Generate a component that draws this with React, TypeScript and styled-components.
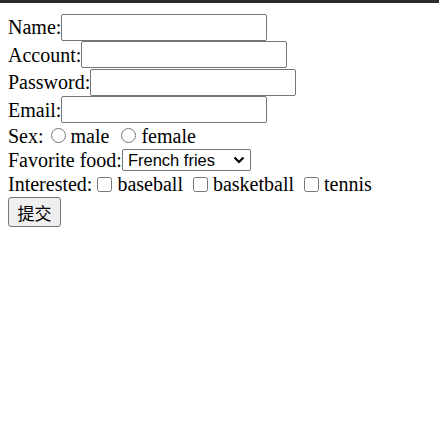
import styled, { createGlobalStyle } from 'styled-components';

const GlobalStyle = createGlobalStyle`
  html, body {
    margin: 0;
    padding: 0;
    background: #ffffff;
  }
  body {
    font-family: "Liberation Serif", "Noto Sans CJK SC", serif;
    font-size: 20px;
    color: #000000;
  }
`;

const TopBar = styled.div`
  height: 3px;
  background: #2b2b2b;
`;

const Form = styled.form`
  display: flex;
  flex-direction: column;
  padding: 10px 8px 0;
`;

const Row = styled.div<{ h: number }>`
  display: flex;
  align-items: center;
  height: ${({ h }) => h}px;
  white-space: nowrap;
  line-height: 1;
`;

const Label = styled.span`
  font-size: 20px;
`;

const TextInput = styled.input`
  box-sizing: border-box;
  width: 206px;
  height: 27px;
  margin: 0;
  padding: 1px 2px;
  border: 1px solid #767676;
  border-radius: 2px;
  font-family: "Liberation Sans", Arial, sans-serif;
  font-size: 16px;
  background: #ffffff;
`;

const Choice = styled.label`
  display: inline-flex;
  align-items: center;
  margin-right: 5px;
`;

const Radio = styled.input`
  width: 15px;
  height: 15px;
  margin: 0 5px 0 7px;
`;

const Check = styled.input`
  width: 15px;
  height: 15px;
  margin: 0 5px 0 5px;
`;

const SelectWrap = styled.span`
  position: relative;
  display: inline-flex;
`;

const Select = styled.select`
  box-sizing: border-box;
  width: 129px;
  height: 22px;
  margin: 0;
  padding: 0 0 0 5px;
  border: 1px solid #767676;
  border-radius: 2px;
  appearance: none;
  font-family: "Liberation Sans", Arial, sans-serif;
  font-size: 16.5px;
  background: #ffffff;
  color: #000000;
`;

const Chevron = styled.svg`
  position: absolute;
  right: 6px;
  top: 7px;
  pointer-events: none;
`;

const Submit = styled.button`
  box-sizing: border-box;
  width: 53px;
  height: 30px;
  margin: 0;
  padding: 0;
  border: 1px solid #767676;
  border-radius: 3px;
  background: #efefef;
  font-family: "Noto Sans CJK SC", sans-serif;
  font-size: 17px;
  color: #000000;
`;

export default function App() {
  return (
    <>
      <GlobalStyle />
      <TopBar />
      <Form onSubmit={(e) => e.preventDefault()}>
        <Row h={28}>
          <Label>Name:</Label>
          <TextInput type="text" />
        </Row>
        <Row h={27}>
          <Label>Account:</Label>
          <TextInput type="text" />
        </Row>
        <Row h={28}>
          <Label>Password:</Label>
          <TextInput type="password" />
        </Row>
        <Row h={27}>
          <Label>Email:</Label>
          <TextInput type="email" />
        </Row>
        <Row h={25}>
          <Label>Sex:</Label>
          <Choice>
            <Radio type="radio" name="sex" />
            male
          </Choice>
          <Choice>
            <Radio type="radio" name="sex" />
            female
          </Choice>
        </Row>
        <Row h={24}>
          <Label>Favorite food:</Label>
          <SelectWrap>
            <Select defaultValue="fries">
              <option value="fries">French fries</option>
              <option value="burger">Hamburger</option>
            </Select>
            <Chevron width="12" height="8" viewBox="0 0 12 8">
              <path d="M1.5 1.5 L6 6 L10.5 1.5" fill="none" stroke="#000" strokeWidth="2.2" />
            </Chevron>
          </SelectWrap>
        </Row>
        <Row h={24}>
          <Label>Interested:</Label>
          <Choice>
            <Check type="checkbox" />
            baseball
          </Choice>
          <Choice>
            <Check type="checkbox" />
            basketball
          </Choice>
          <Choice>
            <Check type="checkbox" />
            tennis
          </Choice>
        </Row>
        <Row h={32}>
          <Submit type="submit">提交</Submit>
        </Row>
      </Form>
    </>
  );
}
